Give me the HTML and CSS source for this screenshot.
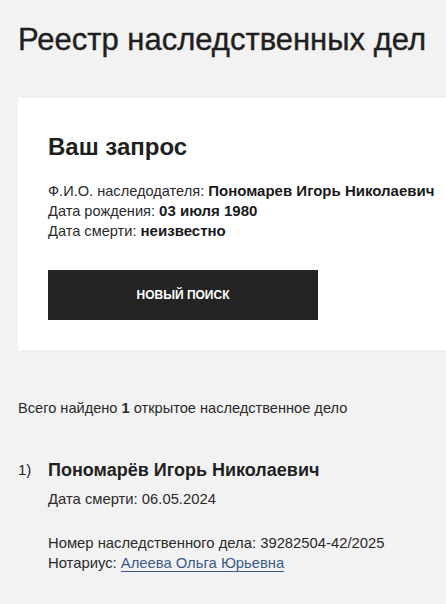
FILE: index.html
```html
<!DOCTYPE html>
<html lang="ru">
<head>
<meta charset="utf-8">
<link rel="stylesheet" href="styles.css">
</head>
<body>
<div class="page">
  <h1 class="title">Реестр наследственных дел</h1>
  <section class="card">
    <h2 class="card-title">Ваш запрос</h2>
    <div class="info">
      <div>Ф.И.О. наследодателя: <b>Пономарев Игорь Николаевич</b></div>
      <div>Дата рождения: <b>03 июля 1980</b></div>
      <div>Дата смерти: <b>неизвестно</b></div>
    </div>
    <button class="btn">НОВЫЙ ПОИСК</button>
  </section>
  <p class="total">Всего найдено <b>1</b> открытое наследственное дело</p>
  <div class="result">
    <div class="num">1)</div>
    <div class="body">
      <div class="name">Пономарёв Игорь Николаевич</div>
      <div class="death">Дата смерти: 06.05.2024</div>
      <div class="case">Номер наследственного дела: 39282504-42/2025</div>
      <div class="notary">Нотариус: <a href="#" class="link">Алеева Ольга Юрьевна</a></div>
    </div>
  </div>
</div>
</body>
</html>
```

FILE: styles.css
```css
* { box-sizing: border-box; }
html, body { margin: 0; padding: 0; }
body {
  background: #f2f2f2;
  font-family: "Liberation Sans", Arial, sans-serif;
  color: #222;
  overflow: hidden;
}
.page { padding: 22px 0 0 18px; }
.title {
  margin: 0;
  font-size: 31px;
  font-weight: 400;
  line-height: 36px;
  color: #1f1f1f;
  white-space: nowrap;
  -webkit-text-stroke: 0.4px #1f1f1f;
}
.card {
  background: #fff;
  margin-top: 40px;
  padding: 34px 0 30px 30px;
}
.card-title {
  margin: 0;
  font-size: 24px;
  font-weight: 700;
  line-height: 30px;
  color: #1f1f1f;
}
.info {
  margin-top: 19px;
  font-size: 14.6px;
  line-height: 20px;
  color: #2a2a2a;
  white-space: nowrap;
}
.info b { color: #1a1a1a; font-size: 15px; }
.btn {
  display: block;
  margin-top: 29px;
  width: 270px;
  height: 50px;
  border: 0;
  background: #242424;
  color: #fff;
  font-family: inherit;
  font-size: 12px;
  font-weight: 700;
}
.total {
  margin: 49px 0 0;
  font-size: 14.6px;
  line-height: 18px;
  color: #2a2a2a;
}
.result {
  display: flex;
  margin-top: 41px;
}
.num {
  width: 30px;
  font-size: 15px;
  line-height: 24px;
  color: #2a2a2a;
}
.name {
  font-size: 18px;
  font-weight: 700;
  line-height: 24px;
  color: #1f1f1f;
}
.death {
  margin-top: 8px;
  font-size: 14.8px;
  line-height: 18px;
  color: #2a2a2a;
}
.case {
  margin-top: 25px;
  font-size: 14.8px;
  line-height: 20px;
  color: #2a2a2a;
}
.notary {
  font-size: 14.8px;
  line-height: 20px;
  color: #2a2a2a;
}
.link {
  color: #3b5a8a;
  text-decoration: none;
  border-bottom: 1px solid #3b5a8a;
}
```
